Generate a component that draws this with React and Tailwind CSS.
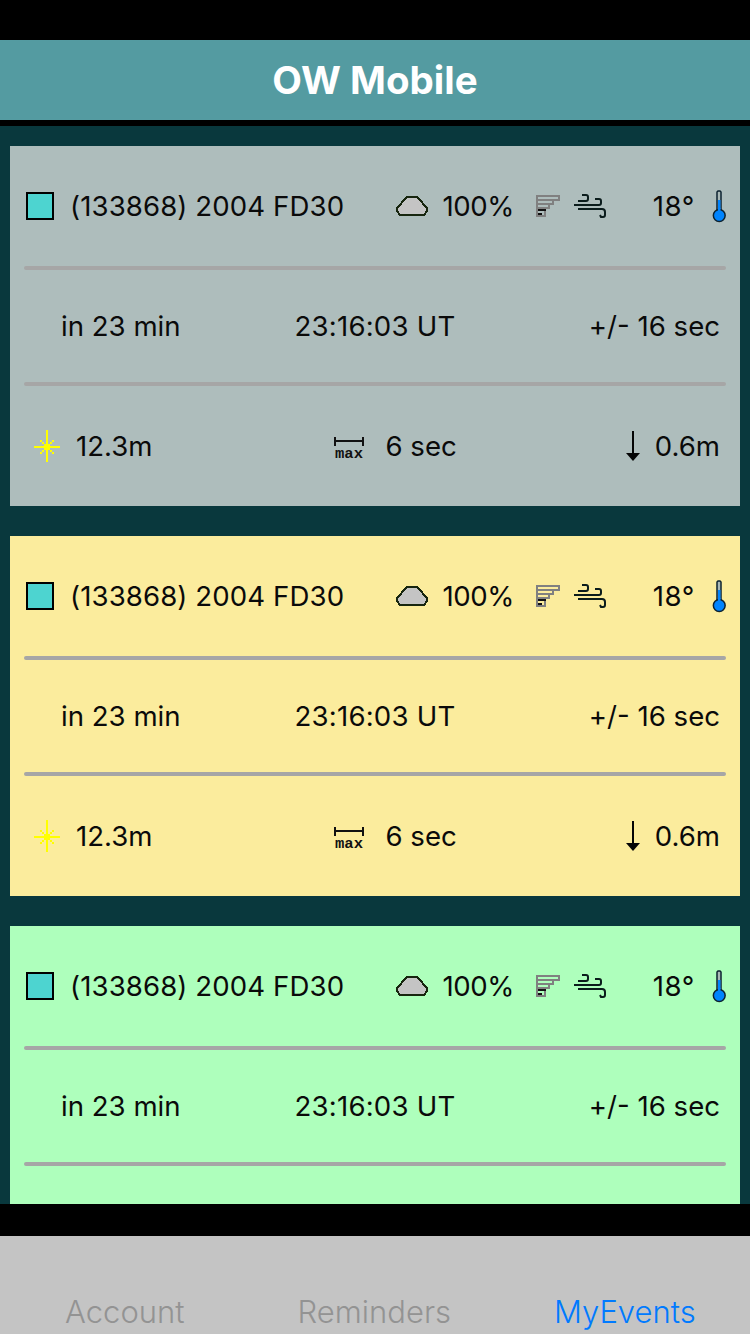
import React from "react";

const CARDS = [
  { color: "bg-[#aebdbc]", lastRow: true },
  { color: "bg-[#fbec9d]", lastRow: true },
  { color: "bg-[#aeffbc]", lastRow: false },
];

const CloudIcon = () => (
  <svg width="32" height="20" viewBox="396 196 32 20" className="block" shapeRendering="crispEdges">
    <path
      d="M407 197 H417 L421 201 L424 205 L427 208 V211 L424 215 H400 L397 211 V208 L400 205 L403 201 Z"
      fill="#c4c4c4"
      stroke="#17260f"
      strokeWidth="2"
      strokeLinejoin="round"
    />
  </svg>
);

const FlagIcon = () => (
  <svg width="24" height="22" viewBox="536 194 24 22" className="block" shapeRendering="crispEdges">
    <path
      d="M537 215 V195 H559 V199 H553 V203 H549 V207 H545 V215 Z M538 199 H553 M538 203 H549 M538 207 H545"
      fill="none"
      stroke="#808080"
      strokeWidth="2"
    />
    <rect x="538" y="208" width="8" height="2" fill="#111" />
    <rect x="538" y="212" width="4" height="2" fill="#111" />
  </svg>
);

const WindIcon = () => (
  <svg width="32" height="24" viewBox="574 194 32 24" className="block">
    <g fill="none" stroke="#0b1c1c" strokeWidth="2">
      <path d="M578 201 H586 Q588 201 588 199 V197 Q588 195 586 195 H582" />
      <path d="M574 205 H599 Q601 205 601 203 V201 Q601 199 599 199 H595" />
      <path d="M578 209 H602 Q605 209 605 212 V215 Q605 217 603 217 H601 L600 215" />
    </g>
  </svg>
);

const ThermoIcon = () => (
  <svg width="15" height="33" viewBox="712 190 15 33" className="block">
    <path d="M717 211 V192 L718 191 H720 L721 192 V211" fill="#a9b8b7" stroke="#0c2230" strokeWidth="1.5" />
    <rect x="718" y="200" width="2.5" height="12" fill="#0084ff" />
    <circle cx="719.25" cy="215.5" r="5.9" fill="#0084ff" stroke="#0c2230" strokeWidth="1.5" />
    <rect x="718" y="208" width="2.5" height="5" fill="#0084ff" />
  </svg>
);

const SunIcon = () => (
  <svg width="26" height="32" viewBox="34 431 26 32" className="block" shapeRendering="crispEdges">
    <g fill="#ffff00">
      <rect x="46" y="431" width="2" height="32" />
      <rect x="34" y="447" width="26" height="2" />
      <rect x="44" y="445" width="6" height="6" />
      <path
        transform="translate(0 1)"
        d="M40 440 h2 v2 h-2 Z M42 442 h2 v2 h-2 Z M54 440 h-2 v2 h2 Z M52 442 h-2 v2 h2 Z M40 454 h2 v-2 h-2 Z M42 452 h2 v-2 h-2 Z M54 454 h-2 v-2 h2 Z M52 452 h-2 v-2 h2 Z"
      />
    </g>
  </svg>
);

const MaxIcon = () => (
  <svg width="30" height="26" viewBox="0 0 30 26" className="mt-[6px] block">
    <path d="M1 1 V10 M29 1 V10 M1 5 H29" stroke="#111" strokeWidth="2" fill="none" />
    <text
      x="15"
      y="22"
      textAnchor="middle"
      fontFamily="'Liberation Mono', monospace"
      fontWeight="700"
      fontSize="14"
      fill="#111"
      textLength="28"
      lengthAdjust="spacingAndGlyphs"
    >
      max
    </text>
  </svg>
);

const ArrowIcon = () => (
  <svg width="14" height="30" viewBox="627 432 14 30" className="block">
    <path d="M633 432 H635 V454 H641 L634 462 L627 454 H633 Z" fill="#050505" />
  </svg>
);

const Divider = () => <div className="mx-[14px] h-1 rounded-sm bg-[#a6a6a6]" />;

const EventCard = ({ color, lastRow }) => (
  <div className={`${color} h-[360px] shrink-0 text-[27.6px] leading-[32px] text-[#0a0a0a]`}>
    <div className="flex h-[120px] items-center pl-4 pr-[13px]">
      <div className="h-7 w-7 border-2 border-black bg-[#4dd4d0]" />
      <span className="ml-4 tracking-[0.1px]">(133868) 2004 FD30</span>
      <div className="ml-auto flex items-center">
        <CloudIcon />
        <span className="ml-[15px] tracking-[-0.5px]">100%</span>
        <div className="ml-[22px]"><FlagIcon /></div>
        <div className="ml-[14px]"><WindIcon /></div>
        <span className="ml-[47px] tracking-[0.6px]">18°</span>
        <div className="ml-[17px]"><ThermoIcon /></div>
      </div>
    </div>
    <Divider />
    <div className="grid h-[112px] grid-cols-3 items-center">
      <span className="pl-[51px]">in 23 min</span>
      <span className="whitespace-nowrap text-center tracking-[0.2px]">23:16:03 UT</span>
      <span className="pr-5 text-right">+/- 16 sec</span>
    </div>
    <Divider />
    {lastRow && (
      <div className="flex h-[120px] items-center pl-6 pr-5">
        <SunIcon />
        <span className="ml-4">12.3m</span>
        <div className="ml-[182px]"><MaxIcon /></div>
        <span className="ml-[21px]">6 sec</span>
        <div className="ml-auto"><ArrowIcon /></div>
        <span className="ml-[15px]">0.6m</span>
      </div>
    )}
  </div>
);

export default function App() {
  return (
    <div className="flex h-[1334px] flex-col overflow-hidden bg-black font-['Inter',sans-serif]">
      <div className="mt-10 flex h-20 shrink-0 items-center justify-center bg-[#549ba1] pt-px text-[38.5px] font-bold text-white">
        OW Mobile
      </div>
      <div className="mt-[6px] flex h-[1078px] shrink-0 flex-col gap-[30px] overflow-hidden bg-[#09383d] px-[10px] pt-5">
        {CARDS.map((card) => (
          <EventCard key={card.color} color={card.color} lastRow={card.lastRow} />
        ))}
      </div>
      <div className="mt-8 flex h-[98px] shrink-0 items-start bg-[#c4c4c4] pt-[57px] text-[31px] font-light leading-[38px]">
        <span className="ml-[65px] text-[#939393]">Account</span>
        <span className="ml-[113px] text-[#939393]">Reminders</span>
        <span className="ml-[103px] text-[#007aff]">MyEvents</span>
      </div>
    </div>
  );
}
